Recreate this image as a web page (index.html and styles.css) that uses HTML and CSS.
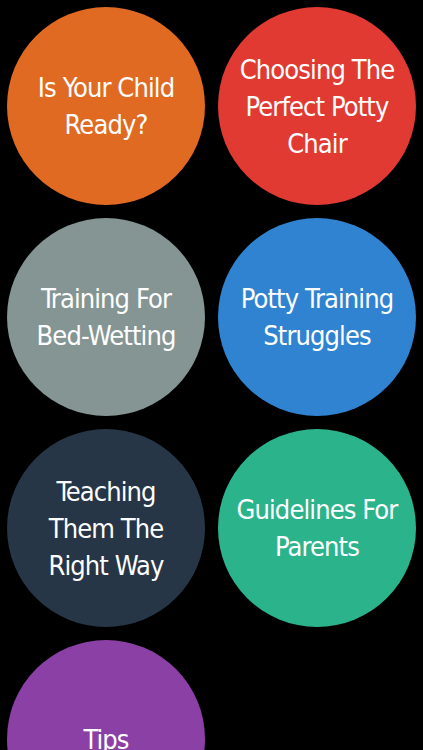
FILE: index.html
```html
<!DOCTYPE html>
<html>
<head>
<meta charset="utf-8">
<link rel="stylesheet" href="styles.css">
</head>
<body>
<div class="grid">
  <div class="circle orange"><span>Is Your Child<br>Ready?</span></div>
  <div class="circle red"><span>Choosing The<br>Perfect Potty<br>Chair</span></div>
  <div class="circle grey"><span>Training For<br>Bed-Wetting</span></div>
  <div class="circle blue"><span>Potty Training<br>Struggles</span></div>
  <div class="circle navy"><span>Teaching<br>Them The<br>Right Way</span></div>
  <div class="circle green"><span>Guidelines For<br>Parents</span></div>
  <div class="circle purple"><span>Tips</span></div>
</div>
</body>
</html>
```
FILE: styles.css
```css
html, body {
  margin: 0;
  padding: 0;
  background: #000;
}
body {
  width: 423px;
  height: 750px;
  overflow: hidden;
}
.grid {
  display: grid;
  grid-template-columns: 198px 198px;
  gap: 13px;
  padding: 7px;
}
.circle {
  width: 198px;
  height: 198px;
  border-radius: 50%;
  display: flex;
  align-items: center;
  justify-content: center;
  text-align: center;
  color: #fff;
  font-family: "DejaVu Sans Condensed", "Liberation Sans", sans-serif;
  font-size: 27px;
  letter-spacing: -0.9px;
  line-height: 37px;
}
.orange { background: #e06a22; }
.red { background: #e03a33; }
.grey { background: #849593; }
.blue { background: #2f83d1; }
.navy { background: #263647; }
.green { background: #2bb38c; }
.purple { background: #8b40a5; }
```
